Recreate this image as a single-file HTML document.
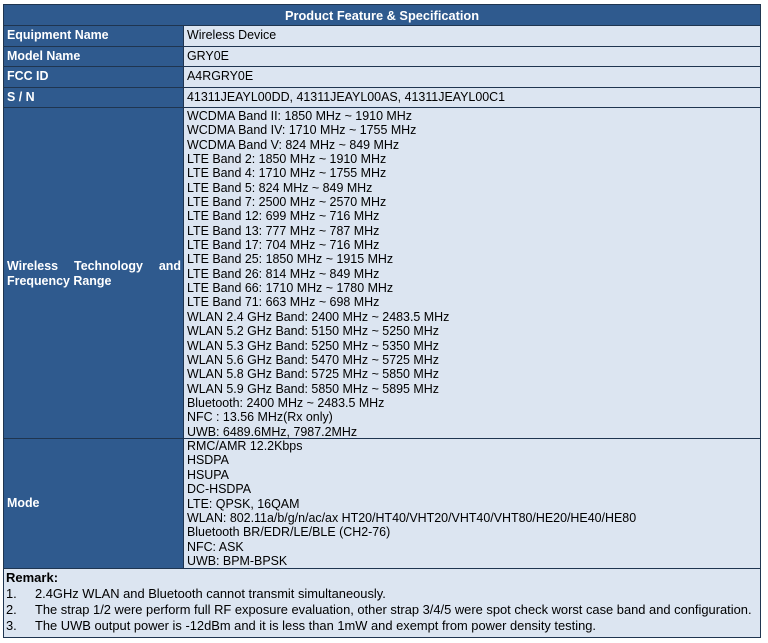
<!DOCTYPE html>
<html><head><style>
body{margin:0;background:#fff;width:768px;height:643px;position:relative;font-family:"Liberation Sans",Arial,sans-serif;font-size:12.45px;color:#000}
.b{position:absolute;box-sizing:border-box;border:1px solid #1f3550}
.h{background:#2f5a8e;color:#fff;font-weight:bold}
.l{background:#dce5f1}
.t{position:absolute;white-space:nowrap}
.w{color:#fff;font-weight:bold}
.r{font-size:12.9px}
</style></head><body>
<div class="b h" style="left:3px;top:4px;width:758px;height:22px;text-align:center;line-height:21px;font-size:12.8px">Product Feature &amp; Specification</div>
<div class="b h" style="left:3px;top:25px;width:181px;height:22px"></div>
<div class="b h" style="left:3px;top:46px;width:181px;height:21px"></div>
<div class="b h" style="left:3px;top:66px;width:181px;height:22px"></div>
<div class="b h" style="left:3px;top:87px;width:181px;height:21px"></div>
<div class="b h" style="left:3px;top:107px;width:181px;height:332px"></div>
<div class="b h" style="left:3px;top:438px;width:181px;height:131px"></div>
<div class="b l" style="left:183px;top:25px;width:578px;height:22px"></div>
<div class="b l" style="left:183px;top:46px;width:578px;height:21px"></div>
<div class="b l" style="left:183px;top:66px;width:578px;height:22px"></div>
<div class="b l" style="left:183px;top:87px;width:578px;height:21px"></div>
<div class="b l" style="left:183px;top:107px;width:578px;height:332px"></div>
<div class="b l" style="left:183px;top:438px;width:578px;height:131px"></div>
<div class="b l" style="left:3px;top:568px;width:758px;height:70px"></div>

<div class="t w" style="left:7px;top:28px">Equipment Name</div>
<div class="t w" style="left:7px;top:49px">Model Name</div>
<div class="t w" style="left:7px;top:69px">FCC ID</div>
<div class="t w" style="left:7px;top:90px">S / N</div>
<div class="t w" style="left:7px;top:259px;width:174px;text-align:justify;text-align-last:justify">Wireless Technology and</div>
<div class="t w" style="left:7px;top:274px">Frequency Range</div>
<div class="t w" style="left:7px;top:496px">Mode</div>

<div class="t" style="left:187px;top:28px">Wireless Device</div>
<div class="t" style="left:187px;top:49px">GRY0E</div>
<div class="t" style="left:187px;top:69px">A4RGRY0E</div>
<div class="t" style="left:187px;top:90px">41311JEAYL00DD, 41311JEAYL00AS, 41311JEAYL00C1</div>
<div class="t" style="left:187px;top:109px;line-height:14.35px">WCDMA Band II: 1850 MHz ~ 1910 MHz<br>WCDMA Band IV: 1710 MHz ~ 1755 MHz<br>WCDMA Band V: 824 MHz ~ 849 MHz<br>LTE Band 2: 1850 MHz ~ 1910 MHz<br>LTE Band 4: 1710 MHz ~ 1755 MHz<br>LTE Band 5: 824 MHz ~ 849 MHz<br>LTE Band 7: 2500 MHz ~ 2570 MHz<br>LTE Band 12: 699 MHz ~ 716 MHz<br>LTE Band 13: 777 MHz ~ 787 MHz<br>LTE Band 17: 704 MHz ~ 716 MHz<br>LTE Band 25: 1850 MHz ~ 1915 MHz<br>LTE Band 26: 814 MHz ~ 849 MHz<br>LTE Band 66: 1710 MHz ~ 1780 MHz<br>LTE Band 71: 663 MHz ~ 698 MHz<br>WLAN 2.4 GHz Band: 2400 MHz ~ 2483.5 MHz<br>WLAN 5.2 GHz Band: 5150 MHz ~ 5250 MHz<br>WLAN 5.3 GHz Band: 5250 MHz ~ 5350 MHz<br>WLAN 5.6 GHz Band: 5470 MHz ~ 5725 MHz<br>WLAN 5.8 GHz Band: 5725 MHz ~ 5850 MHz<br>WLAN 5.9 GHz Band: 5850 MHz ~ 5895 MHz<br>Bluetooth: 2400 MHz ~ 2483.5 MHz<br>NFC : 13.56 MHz(Rx only)<br>UWB: 6489.6MHz, 7987.2MHz</div>
<div class="t" style="left:187px;top:439px;line-height:14.4px">RMC/AMR 12.2Kbps<br>HSDPA<br>HSUPA<br>DC-HSDPA<br>LTE: QPSK, 16QAM<br>WLAN: 802.11a/b/g/n/ac/ax HT20/HT40/VHT20/VHT40/VHT80/HE20/HE40/HE80<br>Bluetooth BR/EDR/LE/BLE (CH2-76)<br>NFC: ASK<br>UWB: BPM-BPSK</div>

<div class="t" style="left:6px;top:570px;font-weight:bold;font-size:13px">Remark:</div>
<div class="t r" style="left:6px;top:586px">1.</div><div class="t r" style="left:35px;top:586px">2.4GHz WLAN and Bluetooth cannot transmit simultaneously.</div>
<div class="t r" style="left:6px;top:602px">2.</div><div class="t r" style="left:35px;top:602px">The strap 1/2 were perform full RF exposure evaluation, other strap 3/4/5 were spot check worst case band and configuration.</div>
<div class="t r" style="left:6px;top:618px">3.</div><div class="t r" style="left:35px;top:618px">The UWB output power is -12dBm and it is less than 1mW and exempt from power density testing.</div>
</body></html>
